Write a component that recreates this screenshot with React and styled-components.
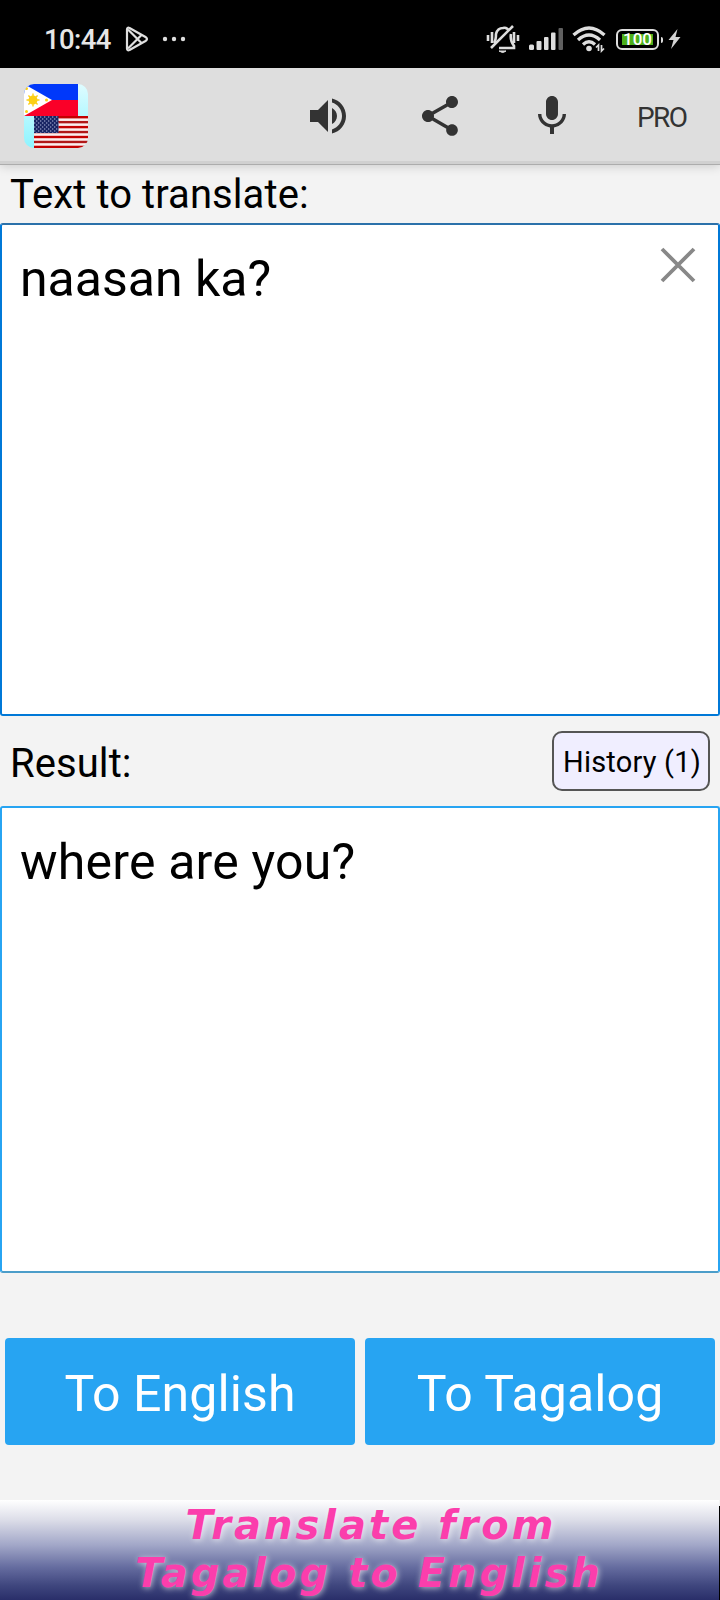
import React from 'react'
import styled, { createGlobalStyle } from 'styled-components'

const GlobalStyle = createGlobalStyle`
  * {
    box-sizing: border-box;
  }
  body {
    margin: 0;
    background: #f3f3f3;
    font-family: Roboto, 'Liberation Sans', sans-serif;
    color: #000;
  }
  button {
    font-family: inherit;
    padding: 0;
    margin: 0;
    border: 0;
    background: none;
  }
`

const Screen = styled.div`
  display: flex;
  flex-direction: column;
  width: 720px;
  height: 1600px;
  overflow: hidden;
`

const StatusBar = styled.header`
  display: flex;
  flex-shrink: 0;
  align-items: center;
  height: 68px;
  padding: 10px 39px 0 44px;
  background: #000;
  color: #e6e6e6;
`

const Clock = styled.span`
  width: 81px;
  padding-top: 1px;
  font-size: 27.5px;
  font-weight: 500;
  line-height: 58px;
  letter-spacing: -0.6px;
`

const StatusIcons = styled.div`
  display: flex;
  align-items: center;
  gap: 8px;
  margin-left: auto;
`

const Toolbar = styled.nav`
  position: relative;
  display: flex;
  flex-shrink: 0;
  align-items: center;
  height: 97px;
  padding: 0 24px;
  background: #dedede;
  border-bottom: 1px solid #acacac;
  box-shadow: inset 0 -3px #d0d0d0, 0 1px 10px rgba(0, 0, 0, 0.18);
`

const Logo = styled.svg`
  margin-right: 216px;
  border-radius: 10px;
`

const ToolButton = styled.button`
  width: 48px;
  height: 48px;
  margin-right: 64px;
  color: #333;
`

const ProButton = styled.button`
  margin-left: -3px;
  padding-top: 2px;
  color: #333;
  font-size: 28px;
  font-weight: 400;
  letter-spacing: -1.6px;
`

const LabelRow = styled.div`
  display: flex;
  flex-shrink: 0;
  align-items: center;
  justify-content: space-between;
  height: ${({ $height }) => $height}px;
  padding: 0 10px;
`

const Label = styled.label`
  padding-top: ${({ $drop }) => $drop || 0}px;
  font-size: 40px;
  line-height: 48px;
  letter-spacing: 0.08px;
`

const TextBox = styled.section`
  display: flex;
  flex-shrink: 0;
  align-items: flex-start;
  justify-content: space-between;
  height: ${({ $height }) => $height}px;
  padding: 18px 22px 0 18px;
  background: #fff;
  border: 2px solid ${({ $color }) => $color};
  border-top-color: ${({ $top, $color }) => $top || $color};
  border-bottom-color: ${({ $bottom, $color }) => $bottom || $color};
  border-radius: 3px;
`

const Content = styled.p`
  margin: 6px 0 0;
  font-size: 50px;
  line-height: 60px;
  letter-spacing: ${({ $spacing }) => $spacing || 0}px;
`

const HistoryButton = styled.button`
  width: 158px;
  height: 60px;
  padding: 2px 0 0 2px;
  background: #f0eeff;
  border: 2px solid #555;
  border-radius: 10px;
  color: #000;
  font-size: 29px;
  letter-spacing: 0.2px;
`

const Actions = styled.div`
  display: grid;
  grid-template-columns: 1fr 1fr;
  flex-shrink: 0;
  gap: 10px;
  padding: 65px 5px 0;
`

const ActionButton = styled.button`
  height: 107px;
  padding-top: 5px;
  border-radius: 4px;
  background: #27a4f2;
  color: #fff;
  font-size: 50px;
  letter-spacing: 0.1px;
`

const Banner = styled.footer`
  flex-shrink: 0;
  height: 100px;
  margin-top: auto;
  padding: 1px 0 0 19px;
  margin-right: 1px;
  box-shadow: 1px 6px #000;
  background: linear-gradient(#fff 0%, #dcdde8 20%, #a2a7c8 45%, #666da0 67%, #40477f 85%, #292e69 100%);
  color: #fb3eac;
  font: italic bold 40px/48px 'DejaVu Sans', sans-serif;
  letter-spacing: 3px;
  text-align: center;
  text-shadow: 1px 1px 6px rgba(255, 255, 255, 0.65);
`

const BannerLine = styled.div`
  padding-left: ${({ $indent }) => $indent || 0}px;
`

const PlayIcon = () => (
  <svg width="24" height="26" viewBox="0 0 24 26" fill="none" stroke="#e0e0e0" strokeWidth="2.2" strokeLinejoin="round">
    <path d="M2 3.500v19Q2 25 4.500 24L20.500 15Q23.500 13 20.500 11L4.500 2Q2 1 2 3.500Z" />
    <path d="M3 3.500 16.500 17M3 22.500 16.500 9" />
  </svg>
)

const Dots = styled.svg`
  margin-left: 13px;
`

const MutedIcon = () => (
  <svg width="34" height="30" viewBox="0 0 34 30" fill="none" stroke="#dedede" strokeWidth="2.6">
    <path d="M8 19c2-3 2-6 2-9 1-4 4-6 7-6 3-1 5 1 6 3M25 10c-1 5 0 8 3 12v2H13" />
    <path d="M27 2 5 24M2 11v6M6 8v11M28 8v11M32 11v6" />
    <path d="M13 27h7q-3 3-7 0Z" fill="#dedede" strokeWidth="1" />
  </svg>
)

const SignalIcon = () => (
  <svg width="36" height="24" viewBox="0 0 36 24" fill="#dedede">
    <rect x="1" y="17.500" width="5" height="5.500" rx="1.500" />
    <rect x="8.500" y="14" width="5" height="9" rx="1" />
    <rect x="16" y="10" width="4.500" height="13" rx="1" />
    <rect x="23" y="5.500" width="4.500" height="17.500" rx="1" />
    <rect x="30.500" y="1" width="4.500" height="22" rx="1" fill="#606060" />
  </svg>
)

const WifiIcon = () => (
  <svg width="34" height="28" viewBox="0 0 34 28" fill="none" stroke="#dedede" strokeWidth="3.3">
    <path d="M1.500 10Q17-4 32.500 10M6 15Q17 5 28 15M11 19.500Q17 14 23 19.500" />
    <circle cx="17" cy="23.500" r="2.800" fill="#dedede" stroke="none" />
    <path d="M26.500 26v-6l-2.500 2.500M29.500 20v6l2.500-2.500" strokeWidth="1.700" />
  </svg>
)

const Battery = styled.div`
  position: relative;
  display: flex;
  align-items: center;
  justify-content: center;
  width: 43px;
  height: 21px;
  margin: 0 1px 0 2px;
  border: 2px solid #dedede;
  border-radius: 6px;
  color: #fff;
  font-size: 17px;
  font-weight: 500;
  line-height: 17px;
  background: linear-gradient(#4caf1b, #4caf1b) center / 31px 11px no-repeat;

  &::after {
    content: '';
    position: absolute;
    right: -6px;
    top: 6px;
    width: 2px;
    height: 6px;
    border-radius: 0 2px 2px 0;
    background: #dedede;
  }
`

const BoltIcon = () => (
  <svg width="13" height="20" viewBox="0 0 13 20" fill="#d4d4d4">
    <path d="M9.500 0 .5 11h5L3 20 12.500 8h-5Z" />
  </svg>
)

const icons = {
  volume:
    'M3 9v6h4l5 5V4L7 9H3zm13.500 3c0-1.770-1.020-3.290-2.500-4.030v8.050c1.480-.73 2.500-2.250 2.500-4.020zM14 3.230v2.060c2.890.86 5 3.540 5 6.710s-2.110 5.850-5 6.710v2.060c4.010-.91 7-4.490 7-8.770s-2.990-7.860-7-8.770z',
  share:
    'M18 16.080c-.76 0-1.440.3-1.960.77L8.910 12.700c.05-.23.090-.46.090-.7s-.04-.47-.09-.7l7.050-4.110c.54.5 1.250.81 2.040.81 1.660 0 3-1.340 3-3s-1.340-3-3-3-3 1.340-3 3c0 .24.040.47.090.7L8.040 9.810C7.500 9.310 6.790 9 6 9c-1.660 0-3 1.340-3 3s1.340 3 3 3c.79 0 1.500-.31 2.040-.81l7.120 4.160c-.05.21-.08.43-.08.65 0 1.610 1.310 2.920 2.920 2.920s2.920-1.310 2.920-2.920-1.310-2.920-2.920-2.920z',
  mic:
    'M12 14c1.660 0 2.990-1.340 2.990-3L15 5c0-1.660-1.340-3-3-3S9 3.340 9 5v6c0 1.660 1.340 3 3 3zm5.300-3c0 3-2.540 5.100-5.300 5.100S6.700 14 6.700 11H5c0 3.410 2.720 6.230 6 6.720V21h2v-3.280c3.280-.48 6-3.300 6-6.720h-1.700z',
}

const Icon = ({ name }) => (
  <svg width="48" height="48" viewBox="0 0 24 24" fill="currentColor">
    <path d={icons[name]} />
  </svg>
)

const FlagsLogo = () => (
  <Logo width="64" height="64" viewBox="0 0 64 64">
    <defs>
      <linearGradient id="sky" x2="0" y2="1">
        <stop stopColor="#dffcff" />
        <stop offset="1" stopColor="#8df4ff" />
      </linearGradient>
      <pattern id="stars" width="4" height="4" patternUnits="userSpaceOnUse">
        <path d="M0 1h1.300M2 3h1.300" stroke="#b4bbe0" strokeWidth="1.200" />
      </pattern>
    </defs>
    <rect width="64" height="64" fill="url(#sky)" />
    <rect width="54" height="16" fill="#0038fa" />
    <rect y="16" width="54" height="16" fill="#fa0028" />
    <path d="m0 0 28 16L0 32Z" fill="#fff" />
    <g stroke="#fccf16" strokeWidth="1.400" fill="#fccf16">
      <path d="M9 9.500v13M2.500 16h13M4.400 11.400l9.200 9.200M4.400 20.600l9.200-9.200" />
      <circle cx="9" cy="16" r="3.800" />
      <circle cx="2.500" cy="4.500" r=".8" />
      <circle cx="2.500" cy="27.500" r=".8" />
      <circle cx="22.500" cy="16" r=".8" />
    </g>
    <rect x="10" y="32" width="54" height="32" fill="#fbeeee" />
    {[0, 1, 2, 3, 4, 5, 6].map((i) => (
      <rect key={i} x="10" y={32 + i * 4.95} width="54" height="2.4" fill={i % 2 ? '#b01818' : '#c40000'} />
    ))}
    <rect x="10" y="32" width="24.500" height="17" fill="#182463" />
    <rect x="10" y="32" width="24.500" height="17" fill="url(#stars)" />
  </Logo>
)

const ClearButton = styled.button`
  width: 36px;
  height: 36px;
  margin-top: 4px;
`

const App = () => (
  <>
    <GlobalStyle />
    <Screen>
      <StatusBar>
        <Clock>10:44</Clock>
        <PlayIcon />
        <Dots width="24" height="6" viewBox="0 0 24 6" fill="#dedede">
          <circle cx="3" cy="3" r="2.2" />
          <circle cx="12" cy="3" r="2.2" />
          <circle cx="21" cy="3" r="2.2" />
        </Dots>
        <StatusIcons>
          <MutedIcon />
          <SignalIcon />
          <WifiIcon />
          <Battery>100</Battery>
          <BoltIcon />
        </StatusIcons>
      </StatusBar>
      <Toolbar>
        <FlagsLogo />
        <ToolButton type="button" aria-label="Speak"><Icon name="volume" /></ToolButton>
        <ToolButton type="button" aria-label="Share"><Icon name="share" /></ToolButton>
        <ToolButton type="button" aria-label="Dictate"><Icon name="mic" /></ToolButton>
        <ProButton type="button">PRO</ProButton>
      </Toolbar>
      <LabelRow $height={58}>
        <Label $drop={1}>Text to translate:</Label>
      </LabelRow>
      <TextBox $height={493} $color="#0078d7" $top="#2b71aa">
        <Content>naasan ka?</Content>
        <ClearButton type="button" aria-label="Clear">
          <svg width="36" height="36" viewBox="0 0 36 36" stroke="#888" strokeWidth="3.800">
            <path d="m2 2 32 32M34 2 2 34" />
          </svg>
        </ClearButton>
      </TextBox>
      <LabelRow $height={90}>
        <Label $drop={6}>Result:</Label>
        <HistoryButton type="button">History (1)</HistoryButton>
      </LabelRow>
      <TextBox $height={467} $color="#27a4f2" $bottom="#4b9dc9">
        <Content $spacing={0.2}>where are you?</Content>
      </TextBox>
      <Actions>
        <ActionButton type="button">To English</ActionButton>
        <ActionButton type="button">To Tagalog</ActionButton>
      </Actions>
      <Banner>
        <BannerLine $indent={4}>Translate from</BannerLine>
        <BannerLine>Tagalog to English</BannerLine>
      </Banner>
    </Screen>
  </>
)

export default App
